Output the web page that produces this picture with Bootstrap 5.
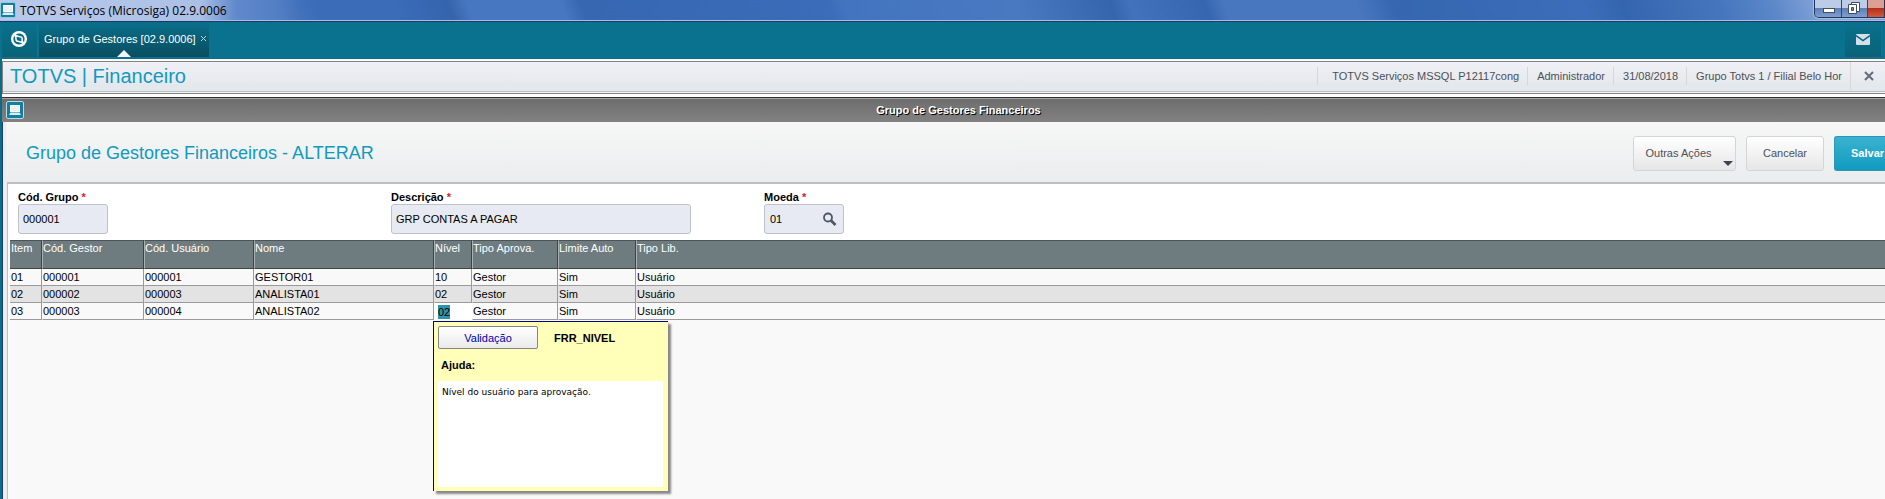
<!DOCTYPE html>
<html lang="pt-BR">
<head>
<meta charset="utf-8">
<meta name="viewport" content="width=device-width, initial-scale=1">
<title>TOTVS Serviços (Microsiga) 02.9.0006</title>
<link href="https://cdn.jsdelivr.net/npm/bootstrap@5.3.0/dist/css/bootstrap.min.css" rel="stylesheet">
<style>
body{font:11px/16px "Liberation Sans",Arial,sans-serif;color:#000;background:#f9f9f9;overflow-x:hidden}
svg{display:block;flex:none}
/* window title bar */
.win-bar{height:22px;border-bottom:1px solid #1c3a66;box-shadow:inset 0 -1px #a9c1e6;
 background:linear-gradient(90deg,rgba(190,206,238,.95) 0,rgba(182,200,234,.9) 200px,rgba(120,155,215,.5) 235px,transparent 300px),
 linear-gradient(70deg,#4a78c0 0 15%,#3a6cb8 17% 21%,#3564ad 24%,#4877c1 25% 30%,#3767b1 31%,#3a6cb9 44%,#4374bf 45%,#4979c1 54%,#3465ad 59%,#4272bc 60%,#3566af 64%,#4877c0 65% 72%,#3566af 74%,#3b6dba 84%,#3465ae 86%,#4475bd 91%,#5c88c9 94%,#8ba9da 97%,#7f9fd2)}
.win-id{padding-top:2px}
.win-title{font:12px/18px "Open Sans","Noto Sans",sans-serif;color:#000}
.win-ctl{height:18px;border:1px solid #20375f;border-top:0;border-radius:0 0 0 5px;box-shadow:0 0 0 1px #a8bfe2;overflow:hidden}
.win-ctl button{height:17px;border:0;border-right:1px solid #2b4675;padding:0;background:linear-gradient(#bccce6 0 46%,#5d80b7 50%,#7f9fcf)}
.win-ctl .win-min{width:27px}
.win-ctl .win-max{width:26px}
.win-ctl .win-close{width:16px;border:0;background:linear-gradient(#dba093 0 44%,#b5301b 50%,#cf5a3c)}
/* tab strip */
.tabs-bar{height:37px;background:#0a718e}
.tabs-bar button{height:35px;border:0;border-right:1px solid #3d6472;border-bottom:1px solid #24596a;background:linear-gradient(#0a718e,#086379);padding:0}
.tabs-bar .tab-home{width:36px;margin-left:2px;padding-right:2px}
.tabs-bar .tab-mail{width:37px;margin-right:3px}
.tab-open{width:170px;height:35px;margin-left:1px;padding:0 0 2px 5px;color:#fff;background:linear-gradient(#0a6f8a,#094e60)}
.tab-open a{color:#fff}
.tab-notch{bottom:0;left:78px}
/* application body */
.app-shell{min-height:calc(100vh - 59px);border-left:2px solid #0a6c88}
.prod-wrap{padding:2px 0 3px;background:#fff}
.prod-bar{height:33px;border:1px solid #848484;border-right:0;background:linear-gradient(#f0f0f5,#e0e6ea);box-shadow:inset 0 -1px #f4f4f6,inset 0 -2px #b9c0c4;color:#4d5057}
.prod-name{font-size:20px;line-height:24px;color:#129abe;padding:2px 0 0 7px}
.prod-bar ul{margin:5px 0 0}
.prod-bar li{border-left:1px solid #d6d8d8;height:18px;line-height:18px;padding:0 8px 0 9px}
.prod-bar li:first-child{padding-left:14px}
.prod-bar .info-close{height:28px;margin-top:-5px;width:35px;padding:0 0 0 13px;display:flex;align-items:center}
.info-close button{border:0;background:none;padding:0}
.frame-bar{height:25px;border-top:1px solid #303030;box-shadow:inset 0 1px #a5a5a5;background:linear-gradient(#6c6c6c,#828282);display:grid;grid-template-columns:1fr auto 1fr}
.frame-title{font-weight:700;color:#fff;text-shadow:1px 1px #000;padding-left:30px}
.frame-body{border-left:1px solid #17406f;padding-left:3px;background:#ededf0}
.act-bar{height:60px;padding-top:2px;background:linear-gradient(#f6f7f6,#ebecee)}
.act-bar h1{font-size:18px;line-height:24px;color:#129abe;font-weight:400}
.act-bar .btn{height:35px;font-size:11px;line-height:16px;border-radius:3px;color:#4d5057;border:1px solid #d4d6d6;background:linear-gradient(#fff,#e6e6e6);padding:0}
.act-bar .btn-more{width:103px;padding:0 12px 0 0}
.act-bar .btn-cancel{width:78px}
.act-bar .btn-save{width:51px;padding-left:16px;border-radius:3px 0 0 3px;border:1px solid #2a98b5;border-right:0;color:#fff;font-weight:700;background:linear-gradient(#3bb2d0,#109bc0)}
.more-caret{right:2px;bottom:4px}
.content-box{border:solid #bfbfbf;border-width:2px 0 0 1px;margin-left:1px;background:#fff;min-height:calc(100vh - 182px);display:flex;flex-direction:column}
.form-grid{display:grid;grid-template-columns:373px 373px 1fr;padding:6px 0 6px 10px}
.form-grid label{font-weight:700;line-height:14px}
.form-grid label span{color:#e8112d}
.fld{height:30px;border:1px solid #bfc3c7;border-radius:3px;background:#e7eaf2;padding:0 4px;font-size:11px;color:#000}
.fld-code{width:90px}
.fld-desc{width:300px}
.fld-cur{width:80px;padding:0 5px}
.fld-cur input{width:40px;border:0;background:none;padding:0;font-size:11px;color:#000}
.fld-cur button{border:0;background:none;padding:0}
/* item grid */
.grid-area{flex:1;background:#f9f9f9;margin-left:2px}
.item-grid{table-layout:fixed;width:100%;border-collapse:separate;border-spacing:0}
.item-grid th{height:29px;background:#6e7c80;color:#fff;font-weight:400;line-height:14px;vertical-align:top;padding:0;border-top:1px solid #4b5559;border-bottom:1px solid #3b4448;border-left:1px solid #a9b1b3;border-right:1px solid #3b4448;white-space:nowrap}
.item-grid th:first-child,.item-grid td:first-child{border-left:0;padding-left:1px}
.item-grid td{height:17px;line-height:16px;padding:0;border-bottom:1px solid #9a9a9a;border-right:1px solid #9a9a9a;border-left:1px solid transparent;background:#f9f9f9}
.item-grid tbody tr:nth-child(2) td{background:#e3e3e3}
.item-grid th:last-child,.item-grid td:last-child{border-right:0}
.item-grid .cell-edit{background:#fff;border-bottom-color:#fff;border-right-color:#fff;position:relative}
.cell-edit input{width:12px;height:14px;display:block;border:0;padding:0;margin:1px 0 0 3px;background:#2e93ad;font-size:11px;line-height:14px}
.help-pop{left:-2px;top:18px;width:235px;height:170px;border:solid #00008b;border-width:1px 0 0 1px;background:#ffffb9;box-shadow:3px 3px 2px #888;padding:4px;clip-path:inset(0 -6px -6px 0);z-index:5}
.help-pop .btn-valid{width:100px;height:23px;border:1px solid #848484;border-radius:2px;background:linear-gradient(#fff,#eaeaea);color:#0000b0;font-size:11px;padding:0}
.help-label{padding:8px 3px}
.help-text{height:106px;background:#fff;font:9px/14px "DejaVu Sans",sans-serif;padding:4px;margin-right:1px}
</style>
</head>
<body>
<header class="win-bar d-flex justify-content-between">
 <div class="win-id d-flex align-items-start gap-1">
  <svg width="16" height="16" viewBox="0 0 16 16"><rect x=".5" y=".5" width="15" height="15" rx="1.5" fill="#137fa0" stroke="#8fcbdc"/><rect x="3.500" y="3.500" width="9" height="6" fill="#e8f1f5" stroke="#fff"/><path d="M2 13l1.500-2.500h9L14 13z" fill="#d8edf4"/></svg>
  <div class="win-title">TOTVS Serviços (Microsiga) 02.9.0006</div>
 </div>
 <div class="win-ctl d-flex">
  <button class="win-min" aria-label="Minimizar"><svg width="26" height="17"><rect x="8.500" y="8.500" width="11" height="4" fill="#fff" stroke="#454c60"/></svg></button>
  <button class="win-max" aria-label="Restaurar"><svg width="25" height="17"><path d="M9.500 2.500h8v9h-8z" fill="#fff" stroke="#454c60"/><path d="M6.500 4.500h8v9h-8z" fill="#fff" stroke="#454c60"/><path d="M9.500 7.500h2v3h-2z" fill="#6c8bc0" stroke="#454c60"/></svg></button>
  <button class="win-close" aria-label="Fechar janela"></button>
 </div>
</header>

<nav class="tabs-bar d-flex justify-content-between">
 <div class="d-flex">
  <button class="tab-home" aria-label="Início"><svg class="mx-auto" width="16" height="16" viewBox="0 0 16 16"><circle cx="8" cy="8" r="8" fill="#fff"/><path d="M5.200 3.200C7.500 2 10.500 2.400 12.200 4.200 13.800 6 14 8.500 13 10.800L11.500 10.500 11 6 5.500 5z" fill="#0a6c87"/><path d="M10.800 12.800C8.500 14 5.500 13.600 3.800 11.800 2.200 10 2 7.500 3 5.200L4.500 5.500 5 10l5.500 1z" fill="#0a6c87"/><path d="M5.500 5l5.500 1.200-.5 4.800L5 9.800z" fill="#0a6c87"/><path d="M4.500 4.500l6.500 1.800M5 9.800l6.500 1.700M4.500 5l.8 4.800M11 6.300l.5 4.700" stroke="#fff" stroke-width="1.400" fill="none"/></svg></button>
  <div class="tab-open position-relative d-flex align-items-center">
   <a href="#" class="text-decoration-none text-nowrap">Grupo de Gestores [02.9.0006]</a>
   <a href="#" class="ms-1" aria-label="Fechar aba"><svg width="7" height="7"><path d="M1 1l5 5M6 1L1 6" stroke="#b5d4dd"/></svg></a>
   <svg class="tab-notch position-absolute" width="14" height="7"><path d="M0 7L7 0l7 7z" fill="#f2f2f6"/></svg>
  </div>
 </div>
 <button class="tab-mail" aria-label="Mensagens"><svg class="mx-auto" width="14" height="11"><rect width="14" height="11" rx="1" fill="#d3e0e8"/><path d="M0 1.500l7 5 7-5" fill="none" stroke="#0a6078" stroke-width="1.500"/></svg></button>
</nav>

<main class="app-shell">
 <section class="prod-wrap">
  <div class="prod-bar d-flex justify-content-between">
   <div class="prod-name">TOTVS | Financeiro</div>
   <ul class="list-unstyled d-flex text-nowrap">
    <li>TOTVS Serviços MSSQL P12117cong</li>
    <li>Administrador</li>
    <li>31/08/2018</li>
    <li>Grupo Totvs 1 / Filial Belo Hor</li>
    <li class="info-close"><button aria-label="Fechar"><svg width="10" height="10"><path d="M1 1l8 8M9 1L1 9" stroke="#646b7b" stroke-width="2"/></svg></button></li>
   </ul>
  </div>
 </section>
 <div class="frame-bar align-items-center">
  <svg class="ms-1" width="18" height="18" viewBox="0 0 18 18"><rect x=".5" y=".5" width="17" height="17" rx="1.500" fill="#137fa0" stroke="#b4dbe6"/><rect x="4.500" y="4.500" width="9" height="6" fill="#e8f1f5" stroke="#fff"/><path d="M3 14l1.500-2.500h9L15 14z" fill="#d8edf4"/></svg>
  <div class="frame-title">Grupo de Gestores Financeiros</div>
 </div>
 <div class="frame-body">
  <div class="act-bar d-flex justify-content-between align-items-center">
   <h1 class="mb-0 ps-3 ms-1">Grupo de Gestores Financeiros - ALTERAR</h1>
   <div class="d-flex" style="gap:10px">
    <button class="btn btn-more position-relative">Outras Ações<svg class="more-caret position-absolute" width="10" height="5"><path d="M0 0h10L5 5z" fill="#3f444c"/></svg></button>
    <button class="btn btn-cancel">Cancelar</button>
    <button class="btn btn-save text-start">Salvar</button>
   </div>
  </div>
  <div class="content-box">
   <form class="form-grid">
    <div><label for="grupo" class="d-block">Cód. Grupo <span>*</span></label><input id="grupo" class="fld fld-code d-block" value="000001"></div>
    <div><label for="descr" class="d-block">Descrição <span>*</span></label><input id="descr" class="fld fld-desc d-block" value="GRP CONTAS A PAGAR"></div>
    <div><label for="moeda" class="d-block">Moeda <span>*</span></label>
     <div class="fld fld-cur d-flex align-items-center justify-content-between"><input id="moeda" value="01"><button type="button" aria-label="Pesquisar"><svg width="16" height="15" viewBox="0 0 16 15"><circle cx="6" cy="5.500" r="4" fill="none" stroke="#4b5669" stroke-width="1.800"/><path d="M9 8.500l4.500 4.500" stroke="#4b5669" stroke-width="2.600"/></svg></button></div></div>
   </form>
   <div class="grid-area">
    <table class="item-grid">
     <colgroup><col style="width:32px"><col style="width:102px"><col style="width:110px"><col style="width:180px"><col style="width:38px"><col style="width:86px"><col style="width:78px"><col></colgroup>
     <thead><tr><th>Item</th><th>Cód. Gestor</th><th>Cód. Usuário</th><th>Nome</th><th>Nível</th><th>Tipo Aprova.</th><th>Limite Auto</th><th>Tipo Lib.</th></tr></thead>
     <tbody>
      <tr><td>01</td><td>000001</td><td>000001</td><td>GESTOR01</td><td>10</td><td>Gestor</td><td>Sim</td><td>Usuário</td></tr>
      <tr><td>02</td><td>000002</td><td>000003</td><td>ANALISTA01</td><td>02</td><td>Gestor</td><td>Sim</td><td>Usuário</td></tr>
      <tr><td>03</td><td>000003</td><td>000004</td><td>ANALISTA02</td><td class="cell-edit"><input value="02" aria-label="Nível">
       <div class="help-pop position-absolute">
        <div class="d-flex align-items-center"><button class="btn-valid">Validação</button><b class="ms-3">FRR_NIVEL</b></div>
        <div class="help-label fw-bold">Ajuda:</div>
        <div class="help-text">Nível do usuário para aprovação.</div>
       </div></td><td>Gestor</td><td>Sim</td><td>Usuário</td></tr>
     </tbody>
    </table>
   </div>
  </div>
 </div>
</main>
<script src="https://cdn.jsdelivr.net/npm/bootstrap@5.3.0/dist/js/bootstrap.bundle.min.js"></script>
</body>
</html>
